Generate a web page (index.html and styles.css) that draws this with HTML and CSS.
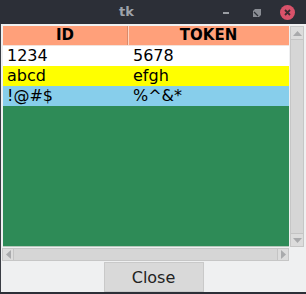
FILE: index.html
```html
<!DOCTYPE html>
<html>
<head>
<meta charset="utf-8">
<link rel="stylesheet" href="styles.css">
</head>
<body>
<div class="window">
  <div class="titlebar">
    <span class="title">tk</span>
    <span class="btn-min"></span>
    <svg class="btn-restore" width="8" height="8" viewBox="0 0 8 8"><path d="M0 2 L2 0 H8 V6 L6 8 H0 Z" fill="#8a8d94"/><path d="M1 3 L5 7" stroke="#2f3239" stroke-width="1.2"/></svg>
    <svg class="btn-close" width="15" height="15" viewBox="0 0 15 15"><circle cx="7.5" cy="7.5" r="7.5" fill="#d9526a"/><path d="M5 5 L10 10 M10 5 L5 10" stroke="#3a2a30" stroke-width="1.8"/></svg>
  </div>
  <div class="main">
    <div class="content">
      <div class="tree">
        <div class="row head"><div class="c1">ID</div><div class="c2">TOKEN</div></div>
        <div class="row r-white"><div class="c1">1234</div><div class="c2">5678</div></div>
        <div class="row r-yellow"><div class="c1">abcd</div><div class="c2">efgh</div></div>
        <div class="row r-blue"><div class="c1">!@#$</div><div class="c2">%^&amp;*</div></div>
        <div class="fill"></div>
      </div>
      <div class="vscroll">
        <div class="arrow up"><svg width="9" height="5" viewBox="0 0 9 5"><path d="M0 5 L4.5 0 L9 5 Z" fill="#a9aaac"/></svg></div>
        <div class="trough"></div>
        <div class="arrow down"><svg width="9" height="5" viewBox="0 0 9 5"><path d="M0 0 L4.5 5 L9 0 Z" fill="#a9aaac"/></svg></div>
      </div>
    </div>
    <div class="hrow">
      <div class="hscroll">
        <div class="harrow"><svg width="5" height="9" viewBox="0 0 5 9"><path d="M5 0 L0 4.5 L5 9 Z" fill="#a9aaac"/></svg></div>
        <div class="htrough"></div>
        <div class="harrow"><svg width="5" height="9" viewBox="0 0 5 9"><path d="M0 0 L5 4.5 L0 9 Z" fill="#a9aaac"/></svg></div>
      </div>
    </div>
    <div class="btnrow"><button class="close">Close</button></div>
  </div>
  <div class="bottombar"></div>
</div>
</body>
</html>
```
FILE: styles.css
```css
html, body { margin: 0; padding: 0; }
body { width: 306px; height: 294px; overflow: hidden; background: #2c2f37; font-family: "DejaVu Sans", sans-serif; }
.window { width: 306px; height: 294px; display: flex; flex-direction: column; }
.titlebar { height: 24px; background: #2c2f37; position: relative; flex: none; }
.title { position: absolute; left: 119px; top: 4px; color: #9ea3ab; font-weight: bold; font-size: 13px; }
.btn-min { position: absolute; left: 223px; top: 12px; width: 6px; height: 2px; background: #9a9da3; }
.btn-restore { position: absolute; left: 253px; top: 9px; }
.btn-close { position: absolute; left: 280px; top: 5px; }
.main { flex: 1; background: #eff0f1; border-left: 1px solid #3a3d44; display: flex; flex-direction: column; }
.content { display: flex; padding: 2px 0 0 2px; height: 221px; }
.tree { width: 286px; display: flex; flex-direction: column; background: #2e8b57; border-bottom: 1px solid #b5c7bb; }
.row { display: flex; height: 20px; font-size: 16px; line-height: 20px; color: #000; }
.row .c1 { width: 125px; padding-left: 4px; box-sizing: border-box; }
.row .c2 { flex: 1; padding-left: 5px; box-sizing: border-box; }
.head { background: #ffa07a; font-weight: bold; font-size: 15px; border-bottom: 1px solid #f3e2da; height: 19px; line-height: 19px; }
.head .c1, .head .c2 { text-align: center; padding-left: 0; }
.head .c1 { border-right: 1px solid #d98a6a; box-shadow: 1px 0 0 #ffd4c2; }
.r-white { background: #ffffff; }
.r-yellow { background: #ffff00; }
.r-blue { background: #87ceeb; }
.fill { flex: 1; background: #2e8b57; }
.vscroll { width: 14px; margin-left: 1px; display: flex; flex-direction: column; background: #d9d9d9; border: 1px solid #c6c6c6; box-sizing: border-box; }
.arrow { height: 12px; display: flex; align-items: center; justify-content: center; background: #dcdcdc; border-bottom: 1px solid #c4c4c4; }
.arrow.down { border-bottom: none; border-top: 1px solid #c4c4c4; }
.trough { flex: 1; background: #d6d6d6; }
.hrow { padding: 1px 0 0 1px; height: 13px; }
.hscroll { width: 287px; height: 13px; display: flex; background: #d9d9d9; border: 1px solid #c6c6c6; box-sizing: border-box; }
.harrow { width: 10px; display: flex; align-items: center; justify-content: center; background: #dcdcdc; border-right: 1px solid #c4c4c4; }
.harrow:last-child { border-right: none; border-left: 1px solid #c4c4c4; }
.htrough { flex: 1; background: #d6d6d6; }
.btnrow { display: flex; justify-content: center; padding-top: 1px; flex: 1; align-items: flex-start; }
.close { width: 100px; height: 30px; background: #d9d9d9; border: 1px solid #c9c9c9; font-family: "DejaVu Sans", sans-serif; font-size: 16px; color: #222; padding: 0; }
.bottombar { height: 3px; background: #2c2f37; flex: none; }
```
